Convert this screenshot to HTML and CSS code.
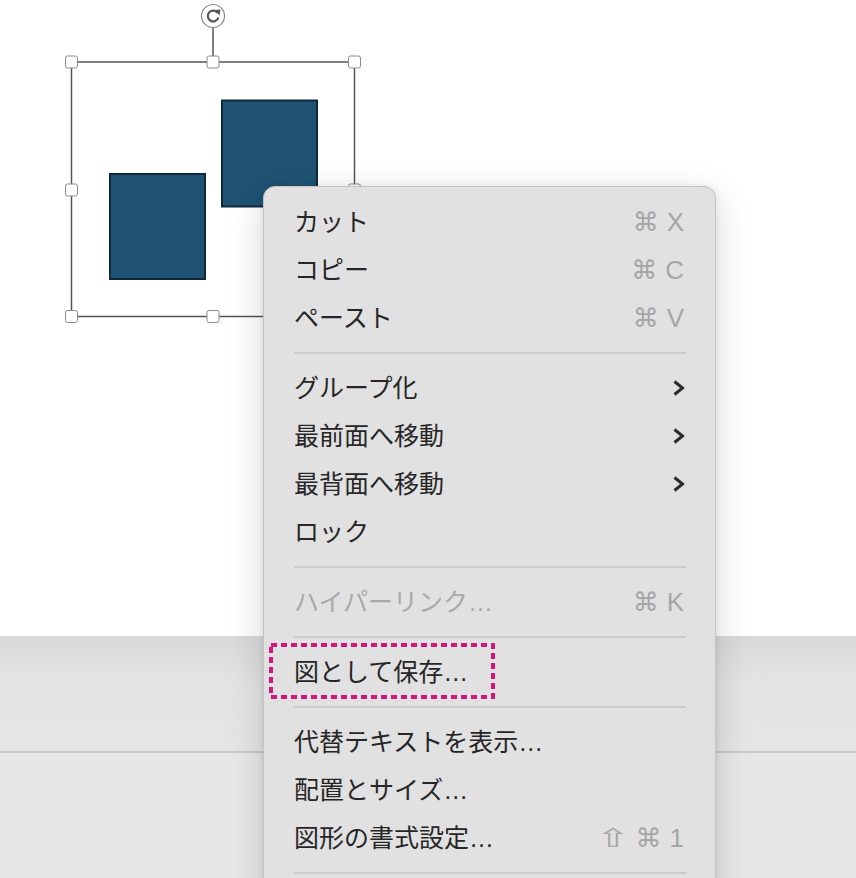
FILE: index.html
```html
<!DOCTYPE html>
<html lang="ja">
<head>
<meta charset="utf-8">
<title>Context menu</title>
<link rel="stylesheet" href="styles.css">
</head>
<body>
<div class="screen">
  <div class="stage">
    <svg class="slide" width="856" height="636" viewBox="0 0 856 636" xmlns="http://www.w3.org/2000/svg">
      <rect x="222" y="100.5" width="95" height="106" fill="#1f5273" stroke="#0d2a3c" stroke-width="2"/>
      <rect x="110" y="174" width="95" height="105" fill="#1f5273" stroke="#0d2a3c" stroke-width="2"/>
      <rect x="71.5" y="62" width="283" height="254.5" fill="none" stroke="#555" stroke-width="1.5"/>
      <line x1="213" y1="28" x2="213" y2="56" stroke="#555" stroke-width="1.5"/>
      <circle cx="213" cy="16" r="11.5" fill="#fff" stroke="#8a8a8a" stroke-width="1.2"/>
      <path d="M217.6 12.8 A5.4 5.4 0 1 0 218.4 17.5" fill="none" stroke="#555" stroke-width="2.2"/>
      <path d="M214.6 10 L220.4 9.6 L219.6 15.4 Z" fill="#555"/>
      <g fill="#fff" stroke="#8c8c8c" stroke-width="1">
        <rect x="65.5" y="56" width="12" height="12" rx="2"/>
        <rect x="207" y="56" width="12" height="12" rx="2"/>
        <rect x="348.5" y="56" width="12" height="12" rx="2"/>
        <rect x="65.5" y="184" width="12" height="12" rx="2"/>
        <rect x="348.5" y="184" width="12" height="12" rx="2"/>
        <rect x="65.5" y="310.5" width="12" height="12" rx="2"/>
        <rect x="207" y="310.5" width="12" height="12" rx="2"/>
        <rect x="348.5" y="310.5" width="12" height="12" rx="2"/>
      </g>
    </svg>
  </div>
  <div class="ribbon"></div>
  <div class="panel"></div>

  <div class="menu">
    <div class="item"><span class="label">カット</span><span class="keys"><span class="cmd">⌘</span><span>X</span></span></div>
    <div class="item"><span class="label">コピー</span><span class="keys"><span class="cmd">⌘</span><span>C</span></span></div>
    <div class="item"><span class="label">ペースト</span><span class="keys"><span class="cmd">⌘</span><span>V</span></span></div>
    <div class="sep"></div>
    <div class="item"><span class="label">グループ化</span><svg class="chev" width="14" height="16" viewBox="0 0 14 16"><polyline points="2.5,1.5 10.5,8 2.5,14.5" fill="none" stroke="#2b2b2b" stroke-width="3"/></svg></div>
    <div class="item"><span class="label">最前面へ移動</span><svg class="chev" width="14" height="16" viewBox="0 0 14 16"><polyline points="2.5,1.5 10.5,8 2.5,14.5" fill="none" stroke="#2b2b2b" stroke-width="3"/></svg></div>
    <div class="item"><span class="label">最背面へ移動</span><svg class="chev" width="14" height="16" viewBox="0 0 14 16"><polyline points="2.5,1.5 10.5,8 2.5,14.5" fill="none" stroke="#2b2b2b" stroke-width="3"/></svg></div>
    <div class="item"><span class="label">ロック</span></div>
    <div class="sep"></div>
    <div class="item disabled"><span class="label">ハイパーリンク…</span><span class="keys"><span class="cmd">⌘</span><span>K</span></span></div>
    <div class="sep"></div>
    <div class="item highlight"><span class="label">図として保存…</span>
      <svg class="dash" width="226" height="56" viewBox="0 0 226 56"><rect x="2" y="2" width="222" height="52" fill="none" stroke="#d5157c" stroke-width="4" stroke-dasharray="6 4"/></svg>
    </div>
    <div class="sep"></div>
    <div class="item"><span class="label">代替テキストを表示…</span></div>
    <div class="item"><span class="label">配置とサイズ…</span></div>
    <div class="item"><span class="label">図形の書式設定…</span><span class="keys"><span class="shift">⇧</span><span class="cmd">⌘</span><span>1</span></span></div>
    <div class="sep"></div>
    <div class="item"><span class="label">&nbsp;</span></div>
  </div>
</div>
</body>
</html>
```
FILE: styles.css
```css
html, body {
  margin: 0;
  padding: 0;
  background: #e7e7e7;
}

.screen {
  position: relative;
  width: 856px;
  height: 878px;
  overflow: hidden;
  display: flex;
  flex-direction: column;
  font-family: "Liberation Sans", "Noto Sans CJK JP", sans-serif;
}

.stage {
  position: relative;
  height: 636px;
  background: #ffffff;
  flex: none;
}

.slide {
  position: absolute;
  left: 0;
  top: 0;
}

.ribbon {
  height: 115px;
  flex: none;
  background: linear-gradient(#d9d9d9, #e3e3e3 40%, #e5e5e5);
  border-bottom: 2px solid #c7c7c7;
}

.panel {
  flex: 1;
  background: #e7e7e7;
}

.menu {
  position: absolute;
  left: 263px;
  top: 186px;
  width: 451px;
  padding-top: 11px;
  background: #e1e1e1;
  border: 1px solid #c3c3c3;
  border-radius: 12px;
  box-shadow: 0 10px 36px rgba(0, 0, 0, 0.16), 0 0 6px rgba(0, 0, 0, 0.08);
}

.item {
  position: relative;
  display: flex;
  align-items: center;
  justify-content: space-between;
  height: 48px;
  padding: 0 31px 0 30px;
  font-size: 25px;
  color: #262626;
}

.label {
  line-height: 48px;
  white-space: nowrap;
}

.disabled .label {
  color: #a9a9a9;
}

.keys {
  display: flex;
  align-items: center;
  gap: 6px;
  font-family: "Liberation Sans", "DejaVu Sans", sans-serif;
  font-size: 26px;
  color: #a6a6a6;
}

.keys .cmd {
  font-family: "DejaVu Sans", sans-serif;
  font-size: 26px;
  margin-right: 2px;
}

.keys .shift {
  font-family: "DejaVu Sans", sans-serif;
  font-size: 26px;
  display: inline-block;
  transform: scaleX(1.6);
  margin: 0 6px 0 4px;
}

.chev {
  margin-right: -2px;
}

.dash {
  position: absolute;
  left: 5px;
  top: -5px;
}

.sep {
  height: 2px;
  margin: 10px 29px 10px 30px;
  background: #cbcbcb;
}
```
